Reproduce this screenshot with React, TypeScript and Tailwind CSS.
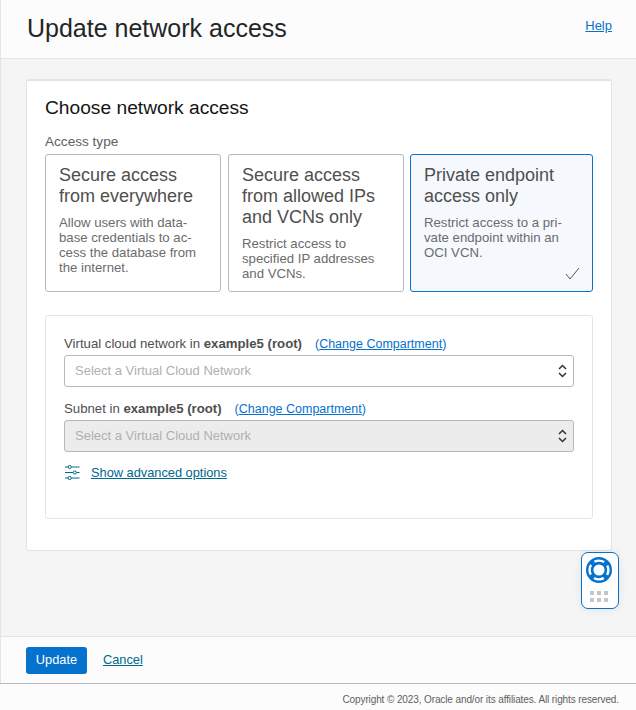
import React from 'react';

const font = "font-['Liberation_Sans',Arial,sans-serif]";

const AccessCard = ({ title, lines, selected, width }: { title: string[]; lines: string[]; selected?: boolean; width: string }) => (
  <div className={`relative shrink-0 rounded-[3px] border px-[13px] pt-[10px] pb-[10px] ${width} ${selected ? '-ml-px border-[#0572ce] bg-[#f5f9fe]' : 'border-[#b3b8c4] bg-white'}`}>
    <div className="text-[18px] leading-[21px] text-[#4f4f4f]">
      {title.map((t) => <div key={t}>{t}</div>)}
    </div>
    <div className="mt-[8px] text-[13.2px] leading-[15px] text-[#6b6b6b]">
      {lines.map((t) => <div key={t}>{t}</div>)}
    </div>
    {selected && (
      <svg width="15" height="13" viewBox="0 0 15 13" fill="none" stroke="#555" strokeWidth="1" className="absolute right-[12px] bottom-[11px]">
        <path d="M1 7l4 5L14 1" />
      </svg>
    )}
  </div>
);

const SelectBox = ({ disabled }: { disabled?: boolean }) => (
  <div className={`flex h-[32px] items-center justify-between rounded-[3px] border border-[#b3b8c4] pr-[6px] pl-[10px] text-[13px] text-[#b0b0b0] ${disabled ? 'bg-[#ececec]' : 'bg-white'}`}>
    <span>Select a Virtual Cloud Network</span>
    <svg width="9" height="14" viewBox="0 0 9 14" fill="none" stroke="#333" strokeWidth="1.5">
      <path d="M1 5l3.5-3.5L8 5M1 9l3.5 3.5L8 9" />
    </svg>
  </div>
);

const App: React.FC = () => {
  return (
    <div className={`relative flex h-[710px] w-[636px] flex-col overflow-hidden bg-[#fcfcfc] ${font}`}>
      <div className="flex flex-1 flex-col border-l border-[#e4e4e4]">
        <div className="flex h-[59px] items-start justify-between border-b border-[#e4e4e4] pt-[13px] pr-[24px] pl-[26px]">
          <h1 className="text-[25px] leading-[30px] text-[#252525]">Update network access</h1>
          <a className="mt-[5px] text-[13px] leading-[16px] text-[#0572ce] underline">Help</a>
        </div>

        <div className="flex-1 bg-[#f5f5f5] pt-[20px] pr-[24px] pl-[25px]">
          <div className="h-[472px] rounded-[3px] border border-t-2 border-[#e4e4e4] bg-white px-[18px] pt-[16px]">
            <h2 className="text-[19.2px] leading-[22px] text-[#161513]">Choose network access</h2>
            <div className="mt-[15px] text-[13.6px] leading-[16px] text-[#5e5e5e]">Access type</div>
            <div className="mt-[4px] flex gap-[7px]">
              <AccessCard
                width="w-[176px]"
                title={['Secure access', 'from everywhere']}
                lines={['Allow users with data-', 'base credentials to ac-', 'cess the database from', 'the internet.']}
              />
              <AccessCard
                width="w-[176px]"
                title={['Secure access', 'from allowed IPs', 'and VCNs only']}
                lines={['Restrict access to', 'specified IP addresses', 'and VCNs.']}
              />
              <AccessCard
                selected
                width="w-[183px]"
                title={['Private endpoint', 'access only']}
                lines={['Restrict access to a pri-', 'vate endpoint within an', 'OCI VCN.']}
              />
            </div>

            <div className="mt-[23px] h-[204px] rounded-[3px] border border-[#e4e4e4] px-[18px] pt-[20px]">
              <div className="text-[13.2px] leading-[16px] text-[#4f4f4f]">
                Virtual cloud network in <b>example5 (root)</b>
                <a className="ml-[13px] text-[12.5px] text-[#0572ce]">(<span className="underline">Change Compartment</span>)</a>
              </div>
              <div className="mt-[3px]"><SelectBox /></div>
              <div className="mt-[14px] text-[13.2px] leading-[16px] text-[#4f4f4f]">
                Subnet in <b>example5 (root)</b>
                <a className="ml-[13px] text-[12.5px] text-[#0572ce]">(<span className="underline">Change Compartment</span>)</a>
              </div>
              <div className="mt-[3px]"><SelectBox disabled /></div>
              <div className="mt-[12px] flex items-center gap-[10px]">
                <svg width="17" height="17" viewBox="0 0 17 17" fill="none" stroke="#00688c" strokeWidth="1">
                  <path d="M1 3h3M7.5 3h8M1 8.5h8M12.5 8.5h3M1 14h3M7.5 14h8" />
                  <circle cx="5.7" cy="3" r="1.6" />
                  <circle cx="10.8" cy="8.5" r="1.6" />
                  <circle cx="5.7" cy="14" r="1.6" />
                </svg>
                <a className="text-[12.8px] leading-[16px] text-[#00688c] underline">Show advanced options</a>
              </div>
            </div>
          </div>
        </div>

        <div className="flex h-[47px] items-center gap-[16px] border-t border-[#e4e4e4] pl-[25px]">
          <button className="h-[27px] w-[61px] rounded-[3px] bg-[#0572ce] text-[12.8px] text-white">Update</button>
          <a className="text-[12.8px] text-[#00688c] underline">Cancel</a>
        </div>
      </div>

      <div className="flex h-[27px] items-center justify-end border-t border-[#b3b8c4] pt-[4px] pr-[17px] text-[10px] tracking-[-0.11px] text-[#5e5e5e]">
        Copyright © 2023, Oracle and/or its affiliates. All rights reserved.
      </div>

      <div className="absolute top-[552px] left-[581px] flex h-[57px] w-[38px] flex-col items-center rounded-[7px] border border-[#0572ce] bg-white pt-[3px] shadow-[0_0_8px_rgba(0,0,0,0.08)]">
        <svg width="28" height="28" viewBox="0 0 28 28" fill="none" className="-translate-x-px">
          <circle cx="14" cy="14" r="9.3" stroke="#0572ce" strokeWidth="7.4" />
          <circle cx="14" cy="14" r="9.4" stroke="#fff" strokeWidth="2.4" strokeDasharray="10.2 4.57" strokeDashoffset="5.1" />
        </svg>
        <div className="mt-[7px] grid -translate-x-px grid-cols-3 gap-[3px]">
          {[0, 1, 2, 3, 4, 5].map((i) => <div key={i} className="h-[4px] w-[4px] bg-[#c4c6c8]" />)}
        </div>
      </div>
    </div>
  );
};

export default App;
